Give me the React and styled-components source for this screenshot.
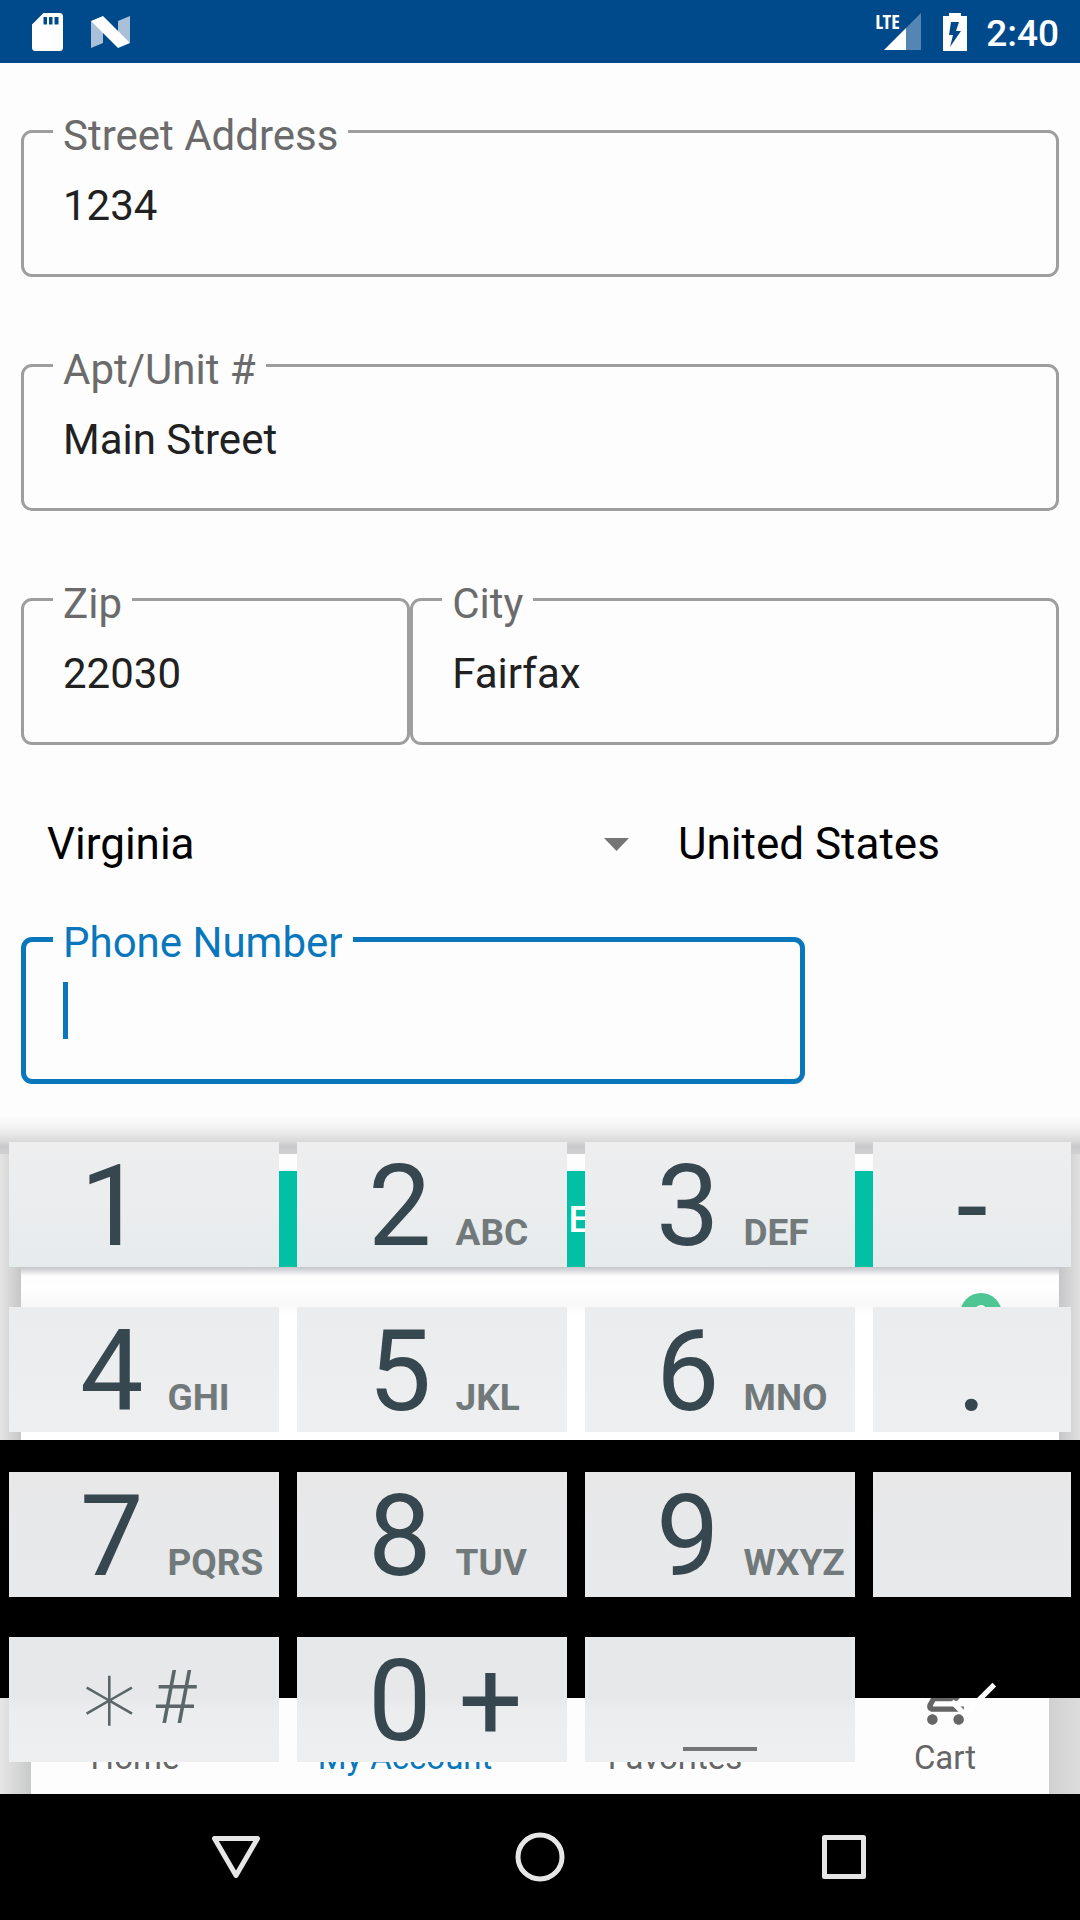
import React from 'react';
import styled, { createGlobalStyle, css } from 'styled-components';

const GlobalStyle = createGlobalStyle`
  *, *::before, *::after { box-sizing: border-box; }
  body { margin: 0; background: #fdfdfd; font-family: Roboto, "Noto Sans", sans-serif; }
  button, input, select { font: inherit; margin: 0; }
`;

const Screen = styled.div`
  display: flex;
  flex-direction: column;
  min-height: 100vh;
  background: #fdfdfd;
`;

/* ---------- status bar ---------- */

const StatusBar = styled.header`
  display: flex;
  align-items: center;
  justify-content: space-between;
  height: 63px;
  padding: 0 21px 0 32px;
  background: #004a8c;
  color: #fff;
`;

const StatusGroup = styled.div`
  display: flex;
  align-items: center;
  gap: ${(p) => p.$gap}px;
  svg { display: block; }
`;

const Signal = styled.div`
  display: grid;
  > * { grid-area: 1 / 1; }
  svg { justify-self: end; }
`;

const Network = styled.span`
  width: 46px;
  font-family: "Open Sans Condensed", Roboto, sans-serif;
  font-size: 20px;
  font-weight: 700;
  line-height: 18px;
`;

const Clock = styled.time`
  margin-left: -3px;
  padding-top: 4px;
  font-size: 37px;
  font-weight: 500;
  line-height: 63px;
`;

/* ---------- form ---------- */

const Form = styled.form`
  padding: 67px 21px 26px;
`;

const FieldStack = styled.div`
  display: grid;
  gap: 87px;
`;

const Columns = styled.div`
  display: grid;
  grid-template-columns: ${(p) => p.$columns};
`;

const SelectRow = styled(Columns)`
  padding: 74px 0 68px;
`;

const FieldBox = styled.div`
  position: relative;
  min-width: 0;
`;

const FieldLabel = styled.label`
  position: absolute;
  top: -19px;
  left: 32px;
  padding: 0 10px;
  background: #fdfdfd;
  color: ${(p) => (p.$active ? '#0a77bd' : '#6b6b6b')};
  font-size: 42px;
  line-height: 50px;
  white-space: nowrap;
`;

const FieldInput = styled.input`
  display: block;
  width: 100%;
  height: 147px;
  padding: 47px 39px 44px;
  border: 3px solid #9e9e9e;
  border-radius: 11px;
  outline: none;
  background: transparent;
  color: #212121;
  font-size: 42px;
  line-height: 50px;
  ${(p) =>
    p.$active &&
    css`
      padding: 45px 37px 42px;
      border: 5px solid #0a77bd;
      caret-color: transparent;
    `}
`;

const Caret = styled.span`
  position: absolute;
  top: 45px;
  left: 42px;
  width: 5px;
  height: 57px;
  background: #0a77bd;
`;

const SelectBox = styled.div`
  display: grid;
  align-items: center;
  > * { grid-area: 1 / 1; }
  svg { justify-self: end; margin-right: 23px; pointer-events: none; }
`;

const Select = styled.select`
  appearance: none;
  width: 100%;
  height: 50px;
  padding: 0 26px;
  border: 0;
  background: transparent;
  color: #000;
  font-size: 44px;
  line-height: 50px;
`;

/* ---------- lower half: page content with the keypad above it ---------- */

const Lower = styled.div`
  display: grid;
  > * { grid-area: 1 / 1; min-width: 0; }
`;

const Backdrop = styled.div`
  display: flex;
  flex-direction: column;
`;

const KeypadShade = styled.div`
  height: 44px;
  background: linear-gradient(#fdfdfd 5px, #f2f2f2 18px, #dadada 31px, #cacacc 36px, #d0d0d2);
`;

const Sheet = styled.section`
  flex: 1;
  padding: 0 21px;
  background: linear-gradient(90deg, #e4e4e4, #c6c6c6 21px, #c6c6c8 calc(100% - 21px), #e0e0e0);
`;

const SheetBody = styled.div`
  padding-top: 17px;
  background: #fdfdfd;
`;

const SaveButton = styled.button`
  display: block;
  width: 100%;
  height: 96px;
  padding: 0 0 0 78px;
  border: 0;
  background: #03bfa5;
  color: #fff;
  font-size: 37px;
  font-weight: 500;
`;

const HelpRow = styled.div`
  display: flex;
  justify-content: flex-end;
  align-items: flex-start;
  height: 173px;
  padding: 26px 57px 0;
  background: linear-gradient(#c4c6c9, #dcdde0 4px, #fdfdfd 9px, #fff 20px, #f8f8f9 38px, #fff 48px);
`;

const HelpButton = styled.button`
  display: flex;
  justify-content: center;
  width: 42px;
  height: 42px;
  padding: 12px 0 0;
  border: 0;
  border-radius: 50%;
  background: #50c594;
`;

const Band = styled.div`
  height: 258px;
  background: #000;
`;

const Tabs = styled.nav`
  display: grid;
  grid-template: 96px / repeat(4, 1fr);
  overflow: hidden;
  background:
    linear-gradient(90deg, #e6e6e6, #c8cac9 31px, #fdfdfd 31px, #fdfdfd calc(100% - 31px), #d0d0d0 calc(100% - 31px), #dcdcdc);
`;

const Tab = styled.a`
  display: flex;
  flex-direction: column;
  align-items: center;
  justify-content: flex-end;
  min-height: 0;
  padding-bottom: 16px;
  color: ${(p) => (p.$active ? '#0a77bd' : '#666')};
  font-size: 33px;
  line-height: 40px;
  text-decoration: none;
  white-space: nowrap;
  svg { flex: none; margin-bottom: 8px; }
`;

/* ---------- keypad ---------- */

const Keypad = styled.div`
  display: grid;
  grid-template-columns: 270fr 270fr 270fr 198fr;
  grid-auto-rows: 125px;
  gap: 40px 18px;
  padding: 32px 9px;
`;

const rowTones = [
  'linear-gradient(#eeeeef, #ebedee 50%, #e6ebed)',
  'linear-gradient(#ebecee, #eeeff1)',
  'linear-gradient(#e8e8e9, #e7e9eb)',
  'linear-gradient(#e7e8ea 60px, #ecedef 74px, #eeeff1)',
];

const Key = styled.button`
  display: flex;
  align-items: baseline;
  justify-content: ${(p) => (p.$center ? 'center' : 'flex-start')};
  min-width: 0;
  padding: 0 0 0 ${(p) => (p.$center ? 0 : 71)}px;
  border: 0;
  background: ${(p) => rowTones[p.$row]};
  color: #37474f;
  font-size: 113px;
  line-height: 130px;
  white-space: nowrap;
`;

const KeyLetters = styled.span`
  margin-left: 24px;
  color: #72797b;
  font-size: 37px;
  font-weight: 700;
`;

const KeySecond = styled.span`
  margin-left: 27px;
`;

const SymbolKey = styled(Key)`
  gap: 9px;
  align-items: center;
  padding: 0 0 6px 66px;
  color: #5b6668;
  font-size: 75px;
  font-weight: 300;
  line-height: 90px;
`;

const Asterisk = styled.span`
  font-family: "DejaVu Sans", sans-serif;
  font-size: 110px;
  font-weight: 200;
`;

const SpaceKey = styled(Key)`
  align-items: flex-end;
  padding-bottom: 11px;
`;

const SpaceMark = styled.span`
  width: 74px;
  height: 4px;
  background: #757575;
`;

const EnterKey = styled(Key)`
  align-items: center;
  background: transparent;
`;

/* ---------- system navigation ---------- */

const SystemNav = styled.footer`
  display: grid;
  grid-template-columns: repeat(3, 1fr);
  flex: 1;
  min-height: 126px;
  padding: 0 84px;
  background: #000;
`;

const SystemButton = styled.button`
  display: flex;
  align-items: center;
  justify-content: center;
  padding: 0;
  border: 0;
  background: transparent;
`;

function Field({ id, label, value, active, type = 'text' }) {
  return (
    <FieldBox>
      <FieldInput id={id} type={type} defaultValue={value} $active={active} />
      <FieldLabel htmlFor={id} $active={active}>{label}</FieldLabel>
      {active && <Caret />}
    </FieldBox>
  );
}

const keys = [
  ['1', ''], ['2', 'ABC'], ['3', 'DEF'], ['-'],
  ['4', 'GHI'], ['5', 'JKL'], ['6', 'MNO'], ['.'],
  ['7', 'PQRS'], ['8', 'TUV'], ['9', 'WXYZ'], [''],
];

export default function App() {
  return (
    <Screen>
      <GlobalStyle />
      <StatusBar>
        <StatusGroup $gap={28}>
          <svg width="31" height="38" viewBox="0 0 31 38" aria-hidden="true">
            <path fill="#fff" fillRule="evenodd" d="M11.500 0H27.500A3.500 3.500 0 0 1 31 3.500V34.500A3.500 3.500 0 0 1 27.500 38H3.500A3.500 3.500 0 0 1 0 34.500V11.500ZM11.500 4V11.500H15V4ZM17 4V11.500H20.500V4ZM22.500 4V11.500H26.500V4Z" />
          </svg>
          <svg width="39" height="32" viewBox="0 0 39 32" aria-hidden="true">
            <path fill="#a9c0d8" d="M0 5L12 11V27L0 32ZM39 0L27 5V21L39 27Z" />
            <path fill="#fff" d="M0 5L12 0L39 27L27 32Z" />
          </svg>
        </StatusGroup>
        <StatusGroup $gap={22}>
          <Signal>
            <Network>LTE</Network>
            <svg width="37" height="37" viewBox="0 0 37 37" aria-hidden="true">
              <path fill="#5585b2" d="M37 0V37H22V15Z" />
              <path fill="#fff" d="M22 15V37H0Z" />
            </svg>
          </Signal>
          <svg width="24" height="38" viewBox="0 0 24 38" aria-hidden="true">
            <path fill="#fff" fillRule="evenodd" d="M6 0H18V3H24V38H0V3H6ZM8 9L6 22H10L7 34L18 18H13L16 9Z" />
          </svg>
          <Clock>2:40</Clock>
        </StatusGroup>
      </StatusBar>

      <Form>
        <FieldStack>
          <Field id="street" label="Street Address" value="1234" />
          <Field id="unit" label="Apt/Unit #" value="Main Street" />
          <Columns $columns="3fr 5fr">
            <Field id="zip" label="Zip" value="22030" />
            <Field id="city" label="City" value="Fairfax" />
          </Columns>
        </FieldStack>
        <SelectRow $columns="631fr 407fr">
          <SelectBox>
            <Select aria-label="State" defaultValue="Virginia"><option>Virginia</option></Select>
            <svg width="25" height="13" viewBox="0 0 25 13" aria-hidden="true">
              <path fill="#757575" d="M0 0H25L12.500 13Z" />
            </svg>
          </SelectBox>
          <SelectBox>
            <Select aria-label="Country" defaultValue="United States"><option>United States</option></Select>
          </SelectBox>
        </SelectRow>
        <Columns $columns="784fr 254fr">
          <Field id="phone" type="tel" label="Phone Number" value="" active />
        </Columns>
      </Form>

      <Lower>
        <Backdrop>
          <KeypadShade />
          <Sheet>
            <SheetBody>
              <SaveButton type="button">E</SaveButton>
              <HelpRow>
                <HelpButton type="button" aria-label="Help">
                  <svg width="12" height="18" viewBox="0 0 12 18" fill="none" stroke="#fff" strokeWidth="3" aria-hidden="true">
                    <path d="M2 6A4 4 0 1 1 8 9Q6 10 6 12.500M6 14.500V17.500" />
                  </svg>
                </HelpButton>
              </HelpRow>
            </SheetBody>
          </Sheet>
          <Band />
          <Tabs>
            <Tab href="#home">Home</Tab>
            <Tab href="#account" $active>My Account</Tab>
            <Tab href="#favorites">Favorites</Tab>
            <Tab href="#cart">
              <svg width="63" height="63" viewBox="0 0 24 24" aria-hidden="true">
                <path fill="#666" d="M7 18c-1.100 0-1.990.9-1.990 2S5.900 22 7 22s2-.9 2-2-.9-2-2-2zM1 2v2h2l3.600 7.590-1.350 2.450c-.16.280-.25.610-.25.960 0 1.100.9 2 2 2h12v-2H7.420c-.14 0-.25-.11-.25-.25l.03-.12.9-1.630h7.450c.75 0 1.410-.41 1.750-1.030l3.580-6.490A1 1 0 0 0 20 4H5.210l-.94-2H1zm16 16c-1.100 0-1.990.9-1.990 2s.89 2 1.990 2 2-.9 2-2-.9-2-2-2z" />
              </svg>
              Cart
            </Tab>
          </Tabs>
        </Backdrop>

        <Keypad>
          {keys.map(([main, letters], i) => (
            <Key
              key={i}
              type="button"
              $row={Math.floor(i / 4)}
              $center={letters === undefined}
              aria-label={main ? undefined : 'Delete'}
            >
              {main}
              {letters && <KeyLetters>{letters}</KeyLetters>}
            </Key>
          ))}
          <SymbolKey type="button" $row={3}><Asterisk>∗</Asterisk><span>#</span></SymbolKey>
          <Key type="button" $row={3}>0<KeySecond>+</KeySecond></Key>
          <SpaceKey type="button" $row={3} $center aria-label="Space"><SpaceMark /></SpaceKey>
          <EnterKey type="button" $row={3} $center aria-label="Done">
            <svg width="63" height="63" viewBox="0 0 24 24" aria-hidden="true">
              <path fill="#fff" d="M9 16.170L4.830 12l-1.420 1.410L9 19 21 7l-1.410-1.410z" />
            </svg>
          </EnterKey>
        </Keypad>
      </Lower>

      <SystemNav>
        <SystemButton type="button" aria-label="Back">
          <svg width="50" height="50" viewBox="0 0 50 50" fill="none" stroke="#e6e6e6" strokeWidth="5" strokeLinejoin="round" aria-hidden="true">
            <path d="M3.500 6.500H46.500L25 43.500Z" />
          </svg>
        </SystemButton>
        <SystemButton type="button" aria-label="Home">
          <svg width="50" height="50" viewBox="0 0 50 50" fill="none" stroke="#e6e6e6" strokeWidth="5" aria-hidden="true">
            <circle cx="25" cy="25" r="22" />
          </svg>
        </SystemButton>
        <SystemButton type="button" aria-label="Recent apps">
          <svg width="50" height="50" viewBox="0 0 50 50" fill="none" stroke="#e6e6e6" strokeWidth="5" strokeLinejoin="round" aria-hidden="true">
            <rect x="5.500" y="5.500" width="39" height="39" />
          </svg>
        </SystemButton>
      </SystemNav>
    </Screen>
  );
}
